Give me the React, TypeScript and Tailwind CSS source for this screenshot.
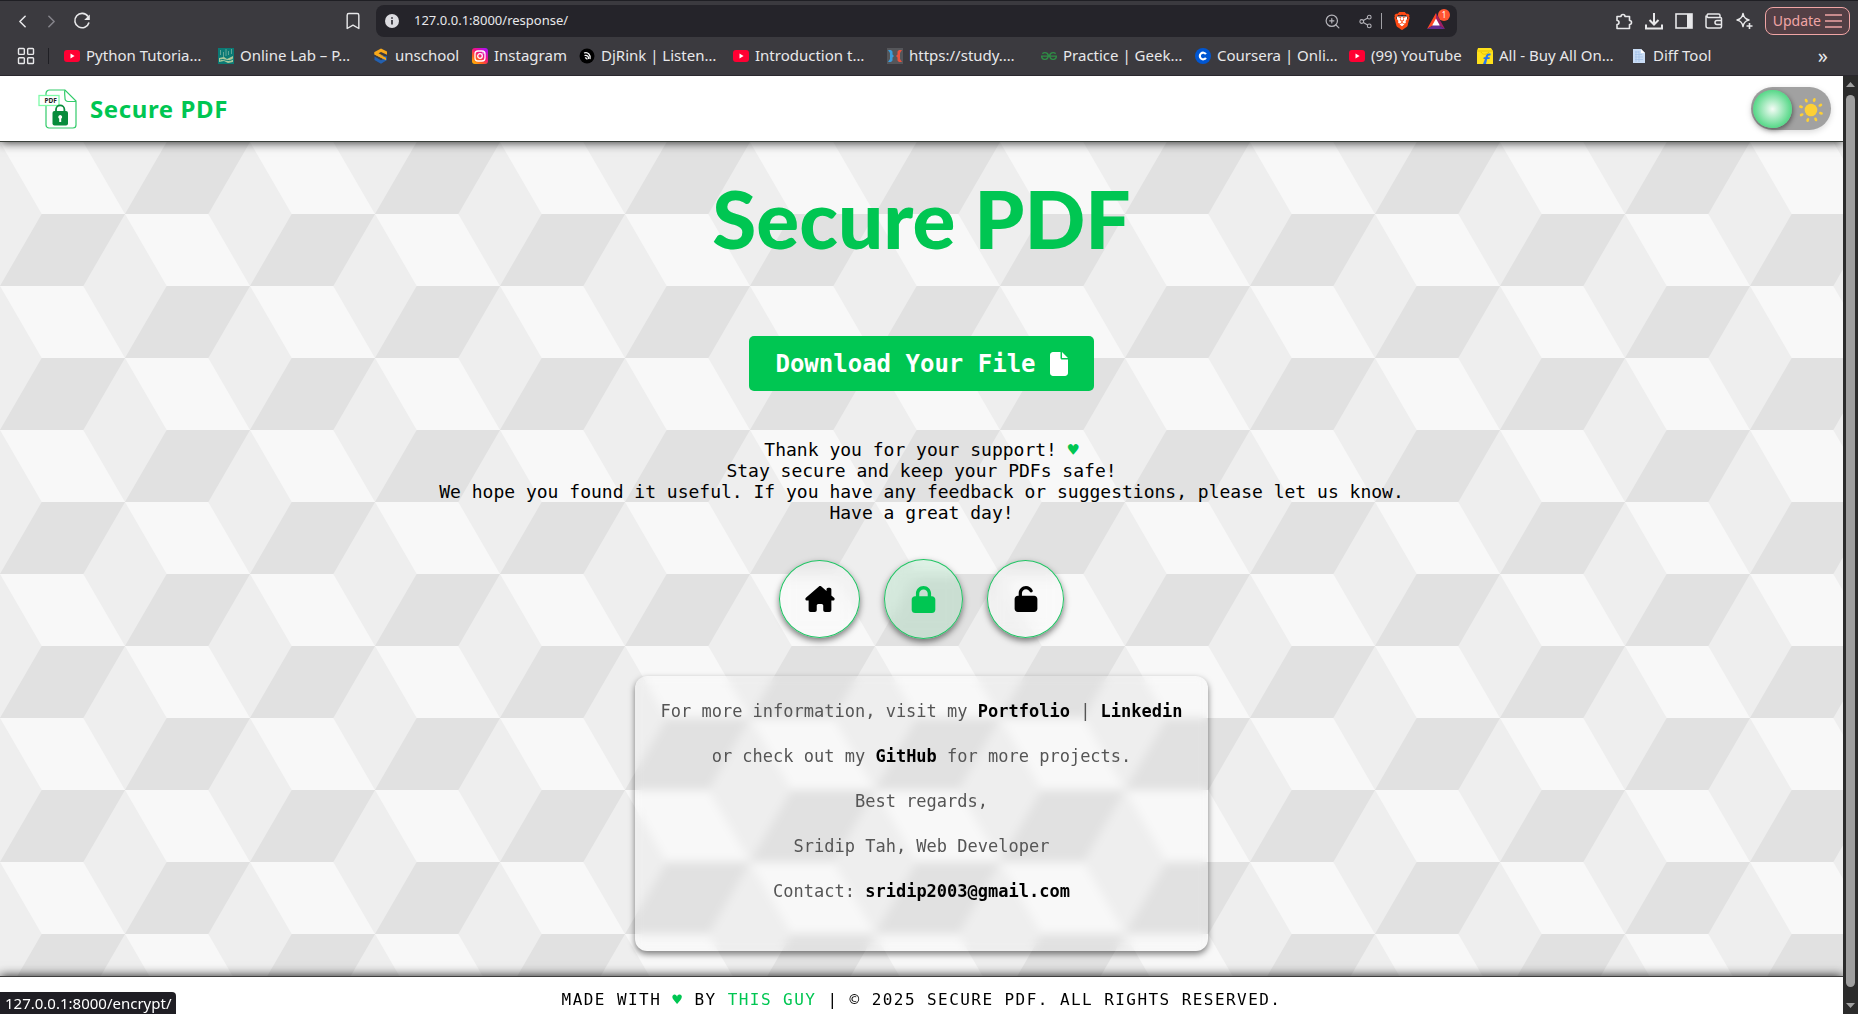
import React from "react";
import { ChevronLeft, ChevronRight, Bookmark, ZoomIn, Share2, LayoutGrid } from "lucide-react";
import { FaHouseChimney, FaLock, FaUnlock, FaFile } from "react-icons/fa6";
import { SiBrave, SiGeeksforgeeks } from "react-icons/si";

const YouTubeIcon = () => (
  <svg viewBox="0 0 16 16" className="size-4">
    <rect x="0" y="2" width="16" height="12" rx="3" fill="#ff0033" />
    <path d="M6.500 5.600 10.600 8l-4.100 2.400z" fill="#fff" />
  </svg>
);

const LabIcon = () => (
  <svg viewBox="0 0 16 16" className="size-4">
    <rect width="16" height="16" fill="#0b7a75" />
    <path d="M2.500 2v5M5.500 4v5M8 1v7M10.500 3v4M13.500 1v5" stroke="#5fa596" strokeWidth="1" />
    <path d="M1 10l5-1 3 2 6-3v6l-5 1-4-2-5 1z" fill="#a9c79a" />
    <path d="M2 12c4-2 8 3 13-1" stroke="#0b7a75" fill="none" />
  </svg>
);

const UnschoolIcon = () => (
  <svg viewBox="0 0 16 16" className="size-4">
    <path d="M8 0.500 14 3.500v3.300L8 4 5.500 5.300 13 9.200v3L1.500 6.600V4z" fill="#f7a81b" />
    <path d="M13.800 8.200 14 12 8 15.800 1.500 12V8.600L8 12.200l2.500-1.400L3 6.900z" fill="#2360b0" />
    <path d="M1.500 4 13 9.800v2.400L1.500 6.600z" fill="#f7a81b" />
  </svg>
);

const InstagramIcon = () => (
  <svg viewBox="0 0 16 16" className="size-4">
    <defs>
      <linearGradient id="ig" x1="0" y1="1" x2="0.8" y2="0">
        <stop offset="0" stopColor="#ffc800" />
        <stop offset="0.35" stopColor="#ff5a1f" />
        <stop offset="0.65" stopColor="#f0108a" />
        <stop offset="1" stopColor="#b010f5" />
      </linearGradient>
    </defs>
    <rect width="16" height="16" rx="3" fill="url(#ig)" />
    <rect x="3" y="3" width="10" height="10" rx="3" fill="none" stroke="#fff" strokeWidth="1.300" />
    <circle cx="8" cy="8" r="2.300" fill="none" stroke="#fff" strokeWidth="1.300" />
    <circle cx="11" cy="5" r="0.700" fill="#fff" />
  </svg>
);

const DjRinkIcon = () => (
  <svg viewBox="0 0 16 16" className="size-4">
    <circle cx="8" cy="8" r="7.500" fill="#000" />
    <path d="M5 5c4-1.500 7 2 6 6M5.500 7.500c2.500-.8 4.500 1 4 3.500M6 10c1.200-.3 2 .3 2 1.500" fill="none" stroke="#fff" strokeWidth="1.300" />
  </svg>
);

const StudyIcon = () => (
  <svg viewBox="0 0 16 16" className="size-4">
    <rect width="16" height="16" fill="#55565a" />
    <path d="M1 2h3l1.500 1.500v3L7 8 5.500 9.500v3L4 14H1l2-3V5z" fill="#3b9ddb" />
    <path d="M15 2h-3l-1.500 1.500v3L9 8l1.500 1.500v3L12 14h3l-2-3V5z" fill="#e8523f" />
  </svg>
);

const GeekIcon = () => <SiGeeksforgeeks className="size-4 text-[#2f8d46]" />;

const CourseraIcon = () => (
  <svg viewBox="0 0 16 16" className="size-4">
    <circle cx="8" cy="8" r="8" fill="#0056d2" />
    <path d="M10.900 6.200A3.300 3.300 0 1 0 10.900 9.800" fill="none" stroke="#fff" strokeWidth="2.200" />
  </svg>
);

const FlipkartIcon = () => (
  <svg viewBox="0 0 16 16" className="size-4">
    <path d="M1 0h13l2 3v13H0V3z" fill="#ffe11b" />
    <path d="M0 3h16M4 4c1 3 6 3 8 0" stroke="#e0b800" strokeWidth="0.800" fill="none" />
    <path d="M6 16h3l1.200-5h2.300l.4-1.800h-2.200c.3-1.400.8-1.900 2.600-1.600l.5-1.900C10.500 5 9 6.400 8.400 9.200H6.800L6.400 11H8z" fill="#2874f0" />
  </svg>
);

const DiffIcon = () => (
  <svg viewBox="0 0 16 16" className="size-4">
    <path d="M2 1h8l4 4v10H2z" fill="#c9dcf5" />
    <path d="M10 1v4h4z" fill="#fff" />
    <path d="M4 4h4M4 6.500h7M4 9h8M4 11.500h8M5 3v11M8 3v11" stroke="#9fbfe8" strokeWidth="0.700" />
  </svg>
);

const bookmarks = [
  { label: "Python Tutoria…", Icon: YouTubeIcon, width: "w-[154px]" },
  { label: "Online Lab – P…", Icon: LabIcon, width: "w-[155px]" },
  { label: "unschool", Icon: UnschoolIcon, width: "w-[99px]" },
  { label: "Instagram", Icon: InstagramIcon, width: "w-[107px]" },
  { label: "DjRink | Listen…", Icon: DjRinkIcon, width: "w-[154px]" },
  { label: "Introduction t…", Icon: YouTubeIcon, width: "w-[154px]" },
  { label: "https://study.…", Icon: StudyIcon, width: "w-[154px]" },
  { label: "Practice | Geek…", Icon: GeekIcon, width: "w-[154px]" },
  { label: "Coursera | Onli…", Icon: CourseraIcon, width: "w-[154px]" },
  { label: "(99) YouTube", Icon: YouTubeIcon, width: "w-[128px]" },
  { label: "All - Buy All On…", Icon: FlipkartIcon, width: "w-[154px]" },
  { label: "Diff Tool", Icon: DiffIcon, width: "w-[99px]" },
];

const stroke = { fill: "none", stroke: "currentColor", strokeWidth: 1.6 };

function BrowserChrome() {
  return (
    <div className="relative z-20 h-[76px] shrink-0 border-t border-b border-t-[#1f1f24] border-b-[#2a282e] bg-[#3b3a3f] text-[#e8e8ea]">
      <div className="flex h-10 items-center">
        <div className="flex w-[376px] shrink-0 items-center pr-[13px] pl-3">
          <button aria-label="Back"><ChevronLeft size={21} strokeWidth={1.8} /></button>
          <button aria-label="Forward" className="ml-2 text-[#85848a]"><ChevronRight size={21} strokeWidth={1.8} /></button>
          <button aria-label="Reload" className="ml-[10px]">
            <svg viewBox="0 0 20 20" className="size-5">
              <path d="M16 5.500A7.200 7.200 0 1 0 17 11.500" {...stroke} />
              <path d="M17.800 3.500v5.600h-5.600z" fill="currentColor" />
            </svg>
          </button>
          <button aria-label="Bookmark this page" className="ml-auto"><Bookmark size={20} strokeWidth={1.7} /></button>
        </div>
        <div className="flex h-8 flex-1 items-center rounded-lg bg-[#25242a] pr-3 pl-2">
          <svg viewBox="0 0 16 16" className="size-4 shrink-0">
            <circle cx="8" cy="8" r="7" fill="#dcdce0" />
            <path d="M8 7v4.500M8 4.200v1.600" stroke="#25242a" strokeWidth="1.600" />
          </svg>
          <input aria-label="Address" defaultValue="127.0.0.1:8000/response/" className="ml-[14px] min-w-0 flex-1 bg-transparent text-[13px] outline-none" />
          <button aria-label="Zoom" className="text-[#b5b4ba]"><ZoomIn size={17} strokeWidth={1.7} /></button>
          <button aria-label="Share" className="ml-[17px] text-[#b5b4ba]"><Share2 size={15} strokeWidth={1.7} /></button>
          <span className="ml-2 h-4 w-px bg-[#a0a0a5]" />
          <button aria-label="Brave Shields" className="ml-[11px]">
            <svg viewBox="0 0 24 24" className="size-[18px]">
              <path d="M5 6h14l-1 9-6 5-6-5z" fill="#fff" />
              <SiBrave size={24} color="#ff4a14" />
            </svg>
          </button>
          <button aria-label="Rewards" className="relative ml-4">
            <svg viewBox="0 0 18 16" className="h-4 w-[18px]">
              <path d="M9 0 0 16l9-5.500z" fill="#ff4724" />
              <path d="M9 0v10.500L18 16z" fill="#9e1f63" />
              <path d="M0 16h18l-9-5.500z" fill="#662d91" />
              <path d="M9 5.500 5.200 12.500h7.600z" fill="#fff" />
            </svg>
            <span className="absolute -top-1 left-[11px] flex size-3 items-center justify-center rounded-full bg-[#ff5530] text-[8px] text-white">1</span>
          </button>
        </div>
        <div className="flex w-[401px] shrink-0 items-center justify-end gap-3 pr-2">
          <button aria-label="Extensions">
            <svg viewBox="0 0 18 18" className="size-[18px]">
              <path d="M2 4.500h4a2 2 0 1 1 4 0h4.500v4a2 2 0 1 1 0 4v4H2v-4a2 2 0 1 0 0-4z" {...stroke} strokeLinejoin="round" />
            </svg>
          </button>
          <button aria-label="Downloads">
            <svg viewBox="0 0 18 18" className="size-[18px]">
              <path d="M9 1v11M4.500 8 9 12.500 13.500 8M1 12.500v4h16v-4" {...stroke} strokeWidth="2" />
            </svg>
          </button>
          <button aria-label="Sidebar">
            <svg viewBox="0 0 18 18" className="size-[18px]">
              <rect x="1" y="2" width="16" height="14" {...stroke} />
              <path d="M12 2h5v14h-5z" fill="currentColor" />
            </svg>
          </button>
          <button aria-label="Wallet">
            <svg viewBox="0 0 18 18" className="size-[18px]">
              <path d="M15 5.500V3.500a1.500 1.500 0 0 0-1.500-1.500H3a2 2 0 0 0 0 3.500h12.500a1 1 0 0 1 1 1V14.500a1.500 1.500 0 0 1-1.500 1.500H3a2 2 0 0 1-2-2V3.500M17 8.500h-5a2 2 0 0 0 0 4h5" {...stroke} strokeWidth="1.500" />
            </svg>
          </button>
          <button aria-label="Leo AI">
            <svg viewBox="0 0 18 18" className="size-[18px]">
              <path d="M8 1.500c.8 4 2 5.500 6 6.500-4 1-5.200 2.500-6 6.500-.8-4-2-5.500-6-6.500 4-1 5.200-2.500 6-6.500z" {...stroke} strokeWidth="1.500" strokeLinejoin="round" />
              <path d="M14.500 11v6M11.500 14h6" {...stroke} />
            </svg>
          </button>
          <button className="flex h-7 items-center gap-1 rounded-lg border border-[#f0a5a5] bg-[#533f45] px-[7px] text-sm text-[#f0a5a5]">
            Update
            <svg viewBox="0 0 17 14" className="h-[14px] w-[17px]">
              <path d="M0 1h17M0 7h17M0 13h17" stroke="currentColor" strokeWidth="1.600" />
            </svg>
          </button>
        </div>
      </div>
      <nav className="flex h-[29px] items-center pl-4 text-[15px]">
        <button aria-label="All bookmarks"><LayoutGrid size={20} strokeWidth={1.7} /></button>
        <span className="mr-[15px] ml-3 h-4 w-px bg-[#1f1f24]" />
        {bookmarks.map(({ label, Icon, width }) => (
          <a key={label} href="#" className={`flex shrink-0 items-center gap-[6px] whitespace-nowrap ${width}`}>
            <Icon />
            {label}
          </a>
        ))}
        <button aria-label="More bookmarks" className="mr-[30px] ml-auto text-xl leading-none">»</button>
      </nav>
    </div>
  );
}

const rayAngles = [18, 63, 108, 153, 198, 243, 288, 333];

function ThemeToggle() {
  return (
    <label className="relative flex h-[43px] w-20 cursor-pointer items-center justify-between rounded-full bg-[#a1a1a1] pr-[7px] pl-[2px] shadow-[0_2px_6px_rgba(0,0,0,0.15)]">
      <input type="checkbox" aria-label="Dark theme" className="sr-only" />
      <span className="h-[38px] w-[39px] rounded-full bg-[radial-gradient(circle,#f4fcf6_0%,#5bd98b_68%)] shadow-[1px_2px_5px_rgba(0,0,0,0.45)]" />
      <svg viewBox="0 0 26 26" className="mt-[3px] size-[26px]" fill="#fdd035">
        <circle cx="13" cy="13" r="6.300" />
        {rayAngles.map((a) => (
          <ellipse key={a} cx="13" cy="2.500" rx="1.400" ry="2" transform={`rotate(${a} 13 13)`} />
        ))}
      </svg>
    </label>
  );
}

function LogoMark() {
  return (
    <svg viewBox="0 0 40 40" className="h-10 w-10">
      <path d="M8 6V4.500a3.500 3.500 0 0 1 3.500-3.500H27L38 12v24a3 3 0 0 1-3 3H11a3 3 0 0 1-3-3V17" fill="none" stroke="#32cb6a" strokeWidth="1.200" />
      <path d="M27 1c-1 3 0 5 0 8.500a3 3 0 0 0 3 3h8" fill="none" stroke="#32cb6a" strokeWidth="1.200" />
      <rect x="1" y="6.500" width="20" height="10" fill="#fff" stroke="#7dfba8" strokeWidth="1.300" />
      <text x="6.500" y="14" fontSize="6.500" fontWeight="700" fill="#222">PDF</text>
      <path d="M18 23v-2.500a4.200 4.200 0 0 1 8.400 0V23" fill="none" stroke="#088c3c" strokeWidth="1.800" />
      <rect x="14.500" y="22" width="15.500" height="14.500" rx="2" fill="#088c3c" />
      <path d="M22.200 26a2 2 0 0 1 1 3.700V33h-2v-3.300a2 2 0 0 1 1-3.700z" fill="#fff" />
    </svg>
  );
}

function CubePattern() {
  return (
    <svg className="absolute inset-0 -z-10 h-full w-full" aria-hidden="true">
      <defs>
        <pattern id="cubes" width="250" height="144" patternUnits="userSpaceOnUse">
          <rect width="250" height="144" fill="#eeeeee" />
          <path d="M0 0h83.300L125 72H41.700zM125 72h83.300L250 144h-83.300z" fill="#f8f8f8" />
          <path d="M166.700 0H250l-41.700 72H125zM41.700 72H125l-41.700 72H0z" fill="#e1e1e1" />
        </pattern>
      </defs>
      <rect width="100%" height="100%" fill="url(#cubes)" />
    </svg>
  );
}

const roundButton =
  "flex items-center justify-center rounded-[50%] border border-[#1fc463] shadow-[0_3px_6px_rgba(0,0,0,0.5)] backdrop-blur-sm";

function ContactCard() {
  return (
    <section className="mt-[37px] rounded-xl px-[25px] pt-[13px] pb-[37px] text-center text-[17px] leading-[45px] text-[#555] shadow-[0_3px_6px_rgba(0,0,0,0.5)] backdrop-blur-[5px]">
      <p>For more information, visit my <a href="#" className="font-bold text-black">Portfolio</a> | <a href="#" className="font-bold text-black">Linkedin</a></p>
      <p>or check out my <a href="#" className="font-bold text-black">GitHub</a> for more projects.</p>
      <p>Best regards,</p>
      <p>Sridip Tah, Web Developer</p>
      <p>Contact: <a href="mailto:sridip2003@gmail.com" className="font-bold text-black">sridip2003@gmail.com</a></p>
    </section>
  );
}

export default function App() {
  return (
    <div className="relative flex h-screen flex-col overflow-hidden bg-white font-['Noto_Sans',sans-serif]">
      <BrowserChrome />
      <div className="flex min-h-0 flex-1">
        <div className="flex min-w-0 flex-1 flex-col">
          <header className="relative z-10 flex h-[66px] shrink-0 items-center justify-between border-b border-[#3a403b] bg-white pr-3 pl-[38px] shadow-[0_0_10px_rgba(0,0,0,0.9)]">
            <a href="#" className="flex items-center gap-3">
              <LogoMark />
              <span className="text-2xl font-bold tracking-wide text-[#00c652]">Secure PDF</span>
            </a>
            <ThemeToggle />
          </header>
          <main className="relative isolate flex flex-1 flex-col items-center pt-9 font-['DejaVu_Sans_Mono',monospace]">
            <CubePattern />
            <h1 className="font-['Lato',sans-serif] text-[80px] leading-[80px] font-black text-[#00c652]">Secure PDF</h1>
            <button className="mt-[78px] flex h-[55px] items-center gap-[14px] rounded-[5px] bg-[#00c652] px-[26px] text-2xl font-bold text-white">
              Download Your File
              <FaFile className="w-[18px]" />
            </button>
            <p className="mt-12 text-center text-lg leading-[21px] text-black">
              Thank you for your support! <span className="text-[#00c652]">♥</span>
              <br />
              Stay secure and keep your PDFs safe!
              <br />
              We hope you found it useful. If you have any feedback or suggestions, please let us know.
              <br />
              Have a great day!
            </p>
            <div className="mt-9 flex items-center gap-6 text-[26px]">
              <a href="#" aria-label="Home" className={`${roundButton} h-[78px] w-[81px] bg-white/20 text-black`}><FaHouseChimney className="w-[30px]" /></a>
              <a href="#" aria-label="Encrypt" className={`${roundButton} h-20 w-[79px] bg-[#00c652]/10 text-[27px] text-[#00c652]`}><FaLock /></a>
              <a href="#" aria-label="Unlock" className={`${roundButton} h-[78px] w-[77px] bg-white/20 text-black`}><FaUnlock /></a>
            </div>
            <ContactCard />
          </main>
          <footer className="relative z-10 border-t border-[#3f3f3f] bg-white pt-3 pb-1 text-center font-['DejaVu_Sans_Mono',monospace] text-base leading-[21px] tracking-[0.09em] text-black shadow-[0_0_10px_rgba(0,0,0,0.9)]">
            MADE WITH <span className="text-[#00c652]">♥</span> BY <a href="#" className="text-[#00c652]">THIS GUY</a> | © 2025 SECURE PDF. ALL RIGHTS RESERVED.
          </footer>
        </div>
        <div className="relative z-20 flex w-[15px] shrink-0 flex-col items-center gap-2 bg-[#2b2b2b] py-[6px]">
          <svg viewBox="0 0 9 5" className="h-[5px] w-[9px]"><path d="M0 5 4.500 0 9 5z" fill="#a0a0a0" /></svg>
          <span className="w-[9px] flex-1 rounded-full bg-[#9f9f9f]" />
          <svg viewBox="0 0 9 5" className="mt-2 h-[5px] w-[9px]"><path d="M0 0 4.500 5 9 0z" fill="#a0a0a0" /></svg>
        </div>
      </div>
      <div className="absolute bottom-0 left-0 z-20 h-[22px] rounded-tr bg-[#1f1e24] px-[5px] text-[15px] leading-[22px] text-white">
        127.0.0.1:8000/encrypt/
      </div>
    </div>
  );
}
